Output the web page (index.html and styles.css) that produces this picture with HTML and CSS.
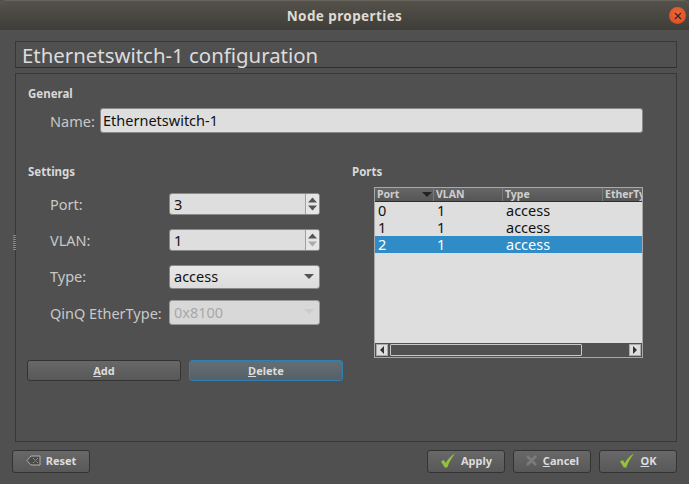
FILE: index.html
```html
<!DOCTYPE html>
<html lang="en">
<head>
<meta charset="utf-8">
<title>Node properties</title>
<link rel="stylesheet" href="styles.css">
</head>
<body>
<div class="window">
  <header class="titlebar">
    <span class="title-text">Node properties</span>
    <span class="close-btn">
      <svg width="10" height="10" viewBox="0 0 10 10"><path d="M2 2l6 6M8 2l-6 6" stroke="#3a2a20" stroke-width="1.4" fill="none"/></svg>
    </span>
  </header>
  <div class="content">
    <div class="heading-frame">Ethernetswitch-1 configuration</div>
    <div class="main-frame">
      <div class="group-label">General</div>
      <div class="name-row">
        <label class="name-label">Name:</label>
        <div class="field name-field">Ethernetswitch-1</div>
      </div>
      <div class="columns">
        <section class="settings">
          <div class="group-label">Settings</div>
          <div class="form">
            <label class="form-label">Port:</label>
            <div class="field spin">
              <span class="spin-value">3</span>
              <span class="spin-arrows">
                <svg width="9" height="16" viewBox="0 0 9 16"><path d="M4.5 1.5L9 6.5H0z" fill="#555"/><path d="M0 9.5h9L4.5 14.5z" fill="#555"/></svg>
              </span>
            </div>
            <label class="form-label">VLAN:</label>
            <div class="field spin">
              <span class="spin-value">1</span>
              <span class="spin-arrows">
                <svg width="9" height="16" viewBox="0 0 9 16"><path d="M4.5 1.5L9 6.5H0z" fill="#555"/><path d="M0 9.5h9L4.5 14.5z" fill="#aaa"/></svg>
              </span>
            </div>
            <label class="form-label type-label">Type:</label>
            <div class="combo">
              <span>access</span>
              <svg width="10" height="5" viewBox="0 0 10 5"><path d="M0 0h10L5 5z" fill="#555"/></svg>
            </div>
            <label class="form-label tight-label">QinQ EtherType:</label>
            <div class="combo combo-disabled">
              <span>0x8100</span>
              <svg width="10" height="5" viewBox="0 0 10 5"><path d="M0 0h10L5 5z" fill="#ccc"/></svg>
            </div>
          </div>
          <div class="action-row">
            <button class="btn"><span><u>A</u>dd</span></button>
            <button class="btn btn-focus"><span><u>D</u>elete</span></button>
          </div>
        </section>
        <section class="ports">
          <div class="group-label">Ports</div>
          <div class="table">
            <div class="thead">
              <div class="th th-port">Port<svg width="10" height="5" viewBox="0 0 10 5"><path d="M0 0h10L5 5z" fill="#222"/></svg></div>
              <div class="th th-vlan">VLAN</div>
              <div class="th th-type">Type</div>
              <div class="th th-ether">EtherTy</div>
            </div>
            <div class="tbody">
              <div class="tr"><span class="td-port">0</span><span class="td-vlan">1</span><span>access</span></div>
              <div class="tr"><span class="td-port">1</span><span class="td-vlan">1</span><span>access</span></div>
              <div class="tr tr-selected"><span class="td-port">2</span><span class="td-vlan">1</span><span>access</span></div>
            </div>
            <div class="hscroll">
              <span class="sb-btn"><svg width="4" height="8" viewBox="0 0 4 8"><path d="M4 0v8L0 4z" fill="#333"/></svg></span>
              <span class="sb-thumb"></span>
              <span class="sb-track"></span>
              <span class="sb-btn"><svg width="4" height="8" viewBox="0 0 4 8"><path d="M0 0v8l4-4z" fill="#333"/></svg></span>
            </div>
          </div>
        </section>
      </div>
    </div>
    <footer class="footer">
      <button class="btn foot-btn">
        <svg class="ico" width="15" height="11" viewBox="0 0 15 11"><path d="M5 1h9v9H5L1 5.500z" fill="#4a4a4a" stroke="#b0b0b0"/><path d="M7 3l5 5M12 3l-5 5" stroke="#aaa" stroke-dasharray="1 1"/></svg>
        <span>Reset</span>
      </button>
      <span class="foot-spacer"></span>
      <button class="btn foot-btn">
        <svg class="ico" width="16" height="15" viewBox="0 0 16 15"><path d="M1 8.500l2.800-1.500 2 3C7.500 6.500 10.500 3 15 0.500 11.500 5 9 9.500 7.300 14.500H4.800z" fill="#94c23a"/></svg>
        <span>Apply</span>
      </button>
      <button class="btn foot-btn">
        <svg class="ico" width="13" height="13" viewBox="0 0 13 13"><path d="M2 2l9 9M11 2l-9 9" stroke="#7b7b7b" stroke-width="2.600" fill="none"/></svg>
        <span><u>C</u>ancel</span>
      </button>
      <button class="btn foot-btn">
        <svg class="ico" width="16" height="15" viewBox="0 0 16 15"><path d="M1 8.500l2.800-1.500 2 3C7.500 6.500 10.500 3 15 0.500 11.500 5 9 9.500 7.300 14.500H4.800z" fill="#94c23a"/></svg>
        <span><u>O</u>K</span>
      </button>
    </footer>
  </div>
  <div class="splitter-dots" aria-hidden="true"></div>
</div>
</body>
</html>
```
FILE: styles.css
```css
* { box-sizing: border-box; }
html, body { margin: 0; padding: 0; }
body {
  width: 689px;
  height: 484px;
  overflow: hidden;
  background: #505050;
  font-family: "Noto Sans", "DejaVu Sans", sans-serif;
  font-size: 14.500px;
  color: #dfdbd2;
}
.window {
  position: relative;
  width: 689px;
  height: 484px;
  display: flex;
  flex-direction: column;
  background: #505050;
}
.titlebar {
  height: 30px;
  flex: none;
  position: relative;
  display: flex;
  align-items: center;
  justify-content: center;
  background: linear-gradient(#55524b, #3e3d38);
  border-top: 1px solid #67645d;
  border-radius: 6px 6px 0 0;
}
.title-text {
  font-weight: 700;
  font-size: 13.500px;
  letter-spacing: 0.4px;
  color: #dfdbd2;
}
.close-btn {
  position: absolute;
  right: 3px;
  top: 6px;
  width: 17px;
  height: 17px;
  border-radius: 50%;
  background: radial-gradient(circle at 50% 40%, #f0683a, #d9481c);
  display: flex;
  align-items: center;
  justify-content: center;
}
.content {
  flex: 1;
  display: flex;
  flex-direction: column;
  padding: 11px 12px 12px 15px;
}
.heading-frame {
  height: 27px;
  border: 1px solid #383838;
  border-bottom-color: #2e2e2e;
  padding-left: 6px;
  font-size: 20.400px;
  line-height: 27px;
  color: #dcdcdc;
  white-space: nowrap;
}
.main-frame {
  margin-top: 5px;
  height: 369px;
  border: 1px solid #383838;
  padding: 12px 12px 0 12px;
}
.group-label {
  font-weight: 700;
  font-size: 11.500px;
  line-height: 15px;
  color: #d8d8d8;
}
.name-row {
  display: flex;
  align-items: center;
  margin-top: 7px;
  padding-left: 22px;
}
.name-label { width: 50px; color: #c8c8c8; }
.field, .combo {
  background: #dedede;
  border: 1px solid #8a8a8a;
  border-radius: 3px;
  color: #111;
}
.name-field {
  width: 543px;
  height: 25px;
  line-height: 23px;
  padding-left: 2px;
}
.columns {
  display: flex;
  margin-top: 31px;
}
.settings { width: 324px; flex: none; }
.ports { width: 291px; flex: none; }
.form {
  display: grid;
  grid-template-columns: 119px 151px;
  grid-template-rows: 22px 22px 24px 25px;
  row-gap: 14px;
  margin-top: 14px;
  padding-left: 22px;
  align-items: center;
}
.form-label { color: #c8c8c8; white-space: nowrap; }
.type-label { padding-bottom: 2px; }
.tight-label { margin-top: -6px; }
.spin {
  height: 22px;
  display: flex;
  background: #dedede;
}
.spin-value { flex: 1; line-height: 20px; padding-left: 4px; }
.spin-arrows {
  width: 14px;
  border-left: 1px solid #a0a0a0;
  background: #e6e6e6;
  border-radius: 0 2px 2px 0;
  display: flex;
  align-items: center;
  justify-content: center;
}
.combo {
  height: 24px;
  padding: 0 5px 2px 4px;
  display: flex;
  align-items: center;
  justify-content: space-between;
  background: linear-gradient(#e8e8e8, #dcdcdc);
}
.combo-disabled {
  height: 25px;
  align-self: start;
  margin-top: -3px;
  color: #a8a8a8;
  background: #d8d8d8;
  border-color: #9a9a9a;
}
.action-row {
  display: flex;
  gap: 8px;
  margin-top: 32px;
  margin-left: -1px;
}
.btn {
  display: flex;
  align-items: center;
  justify-content: center;
  font-family: inherit;
  font-weight: 700;
  font-size: 11px;
  color: #dcdcdc;
  background: linear-gradient(#686868, #585858);
  border: 1px solid #333;
  border-radius: 3px;
  padding: 0 0 1px;
  width: 154px;
  height: 21px;
}
.btn-focus {
  background: linear-gradient(#646f75, #566067);
  border-color: #2f7fb5;
}
.table {
  margin: 8px 0 0 22px;
  width: 269px;
  height: 171px;
  border: 1px solid #a8a8a8;
  background: #dedede;
  display: flex;
  flex-direction: column;
  color: #111;
  overflow: hidden;
}
.thead {
  height: 14px;
  flex: none;
  display: flex;
  background: linear-gradient(#666, #565656);
  border-bottom: 1px solid #2e2e2e;
  color: #cfcfcf;
  font-weight: 700;
  font-size: 10.500px;
  line-height: 13px;
  overflow: hidden;
}
.th {
  padding-left: 2px;
  border-right: 1px solid #7a7a7a;
  flex: none;
  white-space: nowrap;
}
.th-port { width: 59px; display: flex; align-items: center; justify-content: space-between; padding-right: 1px; }
.th-vlan { width: 69px; }
.th-type { width: 100px; }
.th-ether { width: 50px; border-right: 0; }
.tbody { flex: 1; }
.tr {
  height: 17px;
  display: flex;
  line-height: 17px;
}
.td-port { width: 62px; padding-left: 3px; }
.td-vlan { width: 69px; }
.tr-selected { background: #308cc6; color: #fff; }
.hscroll {
  height: 14px;
  flex: none;
  display: flex;
  align-items: center;
  background: #505050;
  padding: 0 1px;
}
.sb-btn {
  width: 12px;
  height: 12px;
  flex: none;
  background: #dedede;
  border: 1px solid #aaa;
  display: flex;
  align-items: center;
  justify-content: center;
}
.sb-thumb {
  width: 192px;
  height: 12px;
  margin-left: 2px;
  flex: none;
  background: #505050;
  border: 1px solid #c8c8c8;
  border-radius: 1px;
}
.sb-track { flex: 1; }
.footer {
  display: flex;
  gap: 8px;
  margin-top: 8px;
  margin-left: -3px;
}
.foot-btn {
  width: 78px;
  height: 23px;
  gap: 5px;
  padding-bottom: 2px;
}
.foot-spacer { flex: 1; }
.splitter-dots {
  position: absolute;
  left: 13px;
  top: 235px;
  width: 3px;
  height: 16px;
  background: repeating-linear-gradient(#8a8a8a 0 1px, transparent 1px 2px);
}
```
